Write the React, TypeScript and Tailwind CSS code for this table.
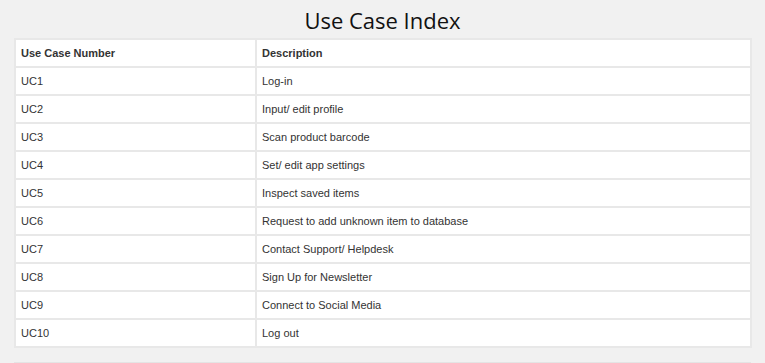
import React from 'react';

const rows: [string, string][] = [
  ['UC1', 'Log-in'],
  ['UC2', 'Input/ edit profile'],
  ['UC3', 'Scan product barcode'],
  ['UC4', 'Set/ edit app settings'],
  ['UC5', 'Inspect saved items'],
  ['UC6', 'Request to add unknown item to database'],
  ['UC7', 'Contact Support/ Helpdesk'],
  ['UC8', 'Sign Up for Newsletter'],
  ['UC9', 'Connect to Social Media'],
  ['UC10', 'Log out'],
];

export default function App() {
  return (
    <div className="min-h-screen bg-[#f1f1f1] px-[14px] pt-[5px] pb-4 text-[#333]">
      <h1 className="text-center text-[22px] leading-[30px] mb-[3px] text-[#111] font-['Open_Sans',sans-serif]">
        Use Case Index
      </h1>
      <table className="w-[738px] border-collapse border-2 border-[#e8e8e8] bg-white font-['Liberation_Sans',Arial,sans-serif] text-[11px]">
        <thead>
          <tr className="h-[28px]">
            <th className="w-[241px] border-2 border-[#e8e8e8] px-[5px] text-left font-bold">Use Case Number</th>
            <th className="border-2 border-[#e8e8e8] px-[5px] text-left font-bold">Description</th>
          </tr>
        </thead>
        <tbody>
          {rows.map(([num, desc]) => (
            <tr key={num} className="h-[28px]">
              <td className="border-2 border-[#e8e8e8] px-[5px]">{num}</td>
              <td className="border-2 border-[#e8e8e8] px-[5px]">{desc}</td>
            </tr>
          ))}
        </tbody>
      </table>
      <div className="mt-[14px] border-t border-[#e4e4e4]" />
    </div>
  );
}
